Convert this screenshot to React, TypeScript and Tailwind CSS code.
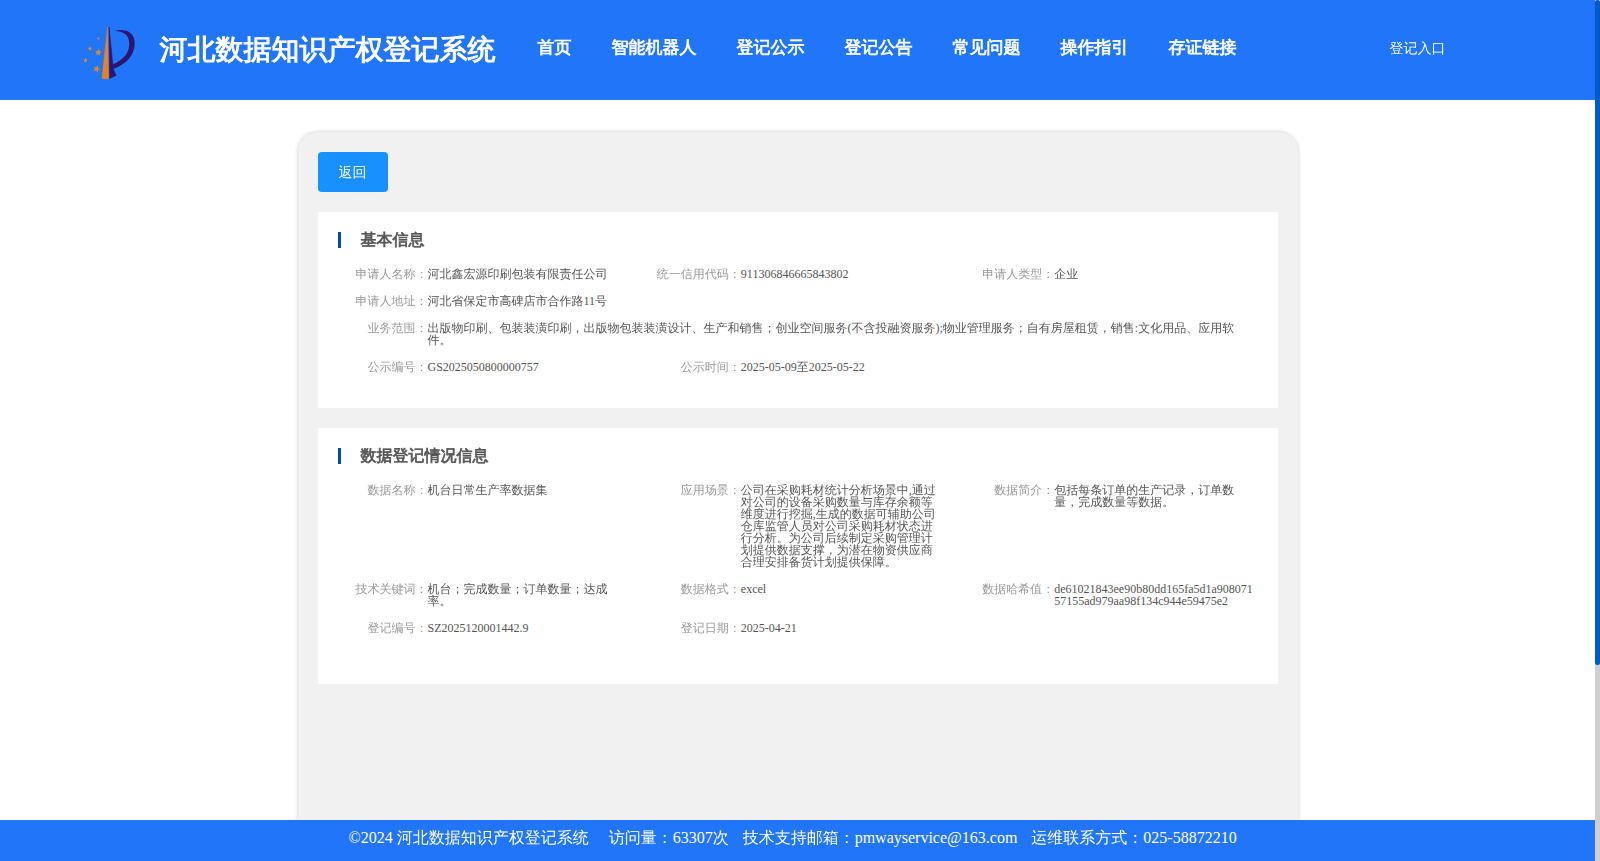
import { clsx } from "clsx";

type Item = {
  label: string;
  value: string;
  full?: boolean;
};

const navItems = ["首页", "智能机器人", "登记公示", "登记公告", "常见问题", "操作指引", "存证链接"];

const basicInfo: Item[] = [
  { label: "申请人名称", value: "河北鑫宏源印刷包装有限责任公司" },
  { label: "统一信用代码", value: "911306846665843802" },
  { label: "申请人类型", value: "企业" },
  { label: "申请人地址", value: "河北省保定市高碑店市合作路11号", full: true },
  {
    label: "业务范围",
    value:
      "出版物印刷、包装装潢印刷，出版物包装装潢设计、生产和销售；创业空间服务(不含投融资服务);物业管理服务；自有房屋租赁，销售:文化用品、应用软件。",
    full: true,
  },
  { label: "公示编号", value: "GS2025050800000757" },
  { label: "公示时间", value: "2025-05-09至2025-05-22" },
];

const dataInfo: Item[] = [
  { label: "数据名称", value: "机台日常生产率数据集" },
  {
    label: "应用场景",
    value:
      "公司在采购耗材统计分析场景中,通过对公司的设备采购数量与库存余额等维度进行挖掘,生成的数据可辅助公司仓库监管人员对公司采购耗材状态进行分析。为公司后续制定采购管理计划提供数据支撑，为潜在物资供应商合理安排备货计划提供保障。",
  },
  { label: "数据简介", value: "包括每条订单的生产记录，订单数量，完成数量等数据。" },
  { label: "技术关键词", value: "机台；完成数量；订单数量；达成率。" },
  { label: "数据格式", value: "excel" },
  { label: "数据哈希值", value: "de61021843ee90b80dd165fa5d1a90807157155ad979aa98f134c944e59475e2" },
  { label: "登记编号", value: "SZ2025120001442.9" },
  { label: "登记日期", value: "2025-04-21" },
];

const star = "M0 -3.4L0.9 -1.1L3.3 -1L1.4 0.5L2 2.9L0 1.5L-2 2.9L-1.4 0.5L-3.3 -1L-0.9 -1.1Z";

function Logo() {
  return (
    <svg width="56" height="56" viewBox="0 0 56 56" className="mt-2 shrink-0">
      <path d="M25.7 1L26.5 53L20 52.4Z" fill="#e8821e" stroke="#e8821e" strokeWidth="0.6" />
      <path d="M27 1L31.2 42.5L34 49.5L27.6 52.6Z" fill="#2a1670" stroke="#2a1670" strokeWidth="0.6" />
      <path
        d="M32.8 4.8C44 2 53 6.5 52.7 17.5C52.4 29.5 44.5 38 31.3 43L31 38.2C42 34 48 25.5 47.2 16.5C46.7 8.5 41.5 5.7 32.8 4.8Z"
        fill="#2a1670"
      />
      <g fill="#d8882f">
        <path d={star} transform="translate(16.3 26.3) rotate(8) scale(1.15)" />
        <path d={star} transform="translate(14.7 43) rotate(20) scale(1.15)" />
        <path d={star} transform="translate(8 22.6) rotate(-12) scale(.75)" />
        <path d={star} transform="translate(3.4 34.3) scale(.75)" />
        <path d={star} transform="translate(16.3 12.4) scale(.5)" />
      </g>
    </svg>
  );
}

function Section({ title, items, className }: { title: string; items: Item[]; className?: string }) {
  return (
    <section className={clsx("mt-5 bg-white pt-5", className)}>
      <h2 className="ml-5 h-4 border-l-3 border-[#00508f] pl-5 text-base leading-4 font-bold text-[#555] [-webkit-text-stroke:0.7px]">
        {title}
      </h2>

      <dl className="mt-5 ml-2.5 flex w-[940px] flex-wrap gap-y-[15px] text-xs leading-3">
        {items.map((item) => (
          <div key={item.label} className={clsx("flex", item.full ? "w-full" : "w-1/3")}>
            <dt className="w-[100px] shrink-0 text-right text-[#999]">{item.label}：</dt>
            <dd className={clsx("break-all text-[#555]", item.full ? "w-[820px]" : "w-[200px]")}>
              {item.value}
            </dd>
          </div>
        ))}
      </dl>
    </section>
  );
}

export default function App() {
  return (
    <div className="flex h-[861px] overflow-hidden bg-white font-['Liberation_Serif','WenQuanYi_Zen_Hei','Noto_Sans_CJK_SC',serif]">
      <div className="flex min-w-0 flex-1 flex-col">

        {/* Header */}
        <header className="flex h-[100px] shrink-0 items-center bg-[#2175f8] pl-[82px] text-white">
          <Logo />
          <h1 className="ml-[21.5px] text-[28px] leading-[38px] font-bold whitespace-nowrap [-webkit-text-stroke:1px]">
            河北数据知识产权登记系统
          </h1>
          <nav className="mb-1 ml-[42px] flex gap-10 text-[17px] leading-6 font-bold whitespace-nowrap [-webkit-text-stroke:0.7px]">
            {navItems.map((name) => (
              <a key={name}>{name}</a>
            ))}
          </nav>
          <a className="mb-0.5 ml-[153px] text-sm whitespace-nowrap">登记入口</a>
        </header>

        {/* Content */}
        <main className="flex min-h-0 flex-1 justify-center overflow-hidden pt-8">
          <div className="h-[900px] w-[1000px] shrink-0 rounded-[20px] bg-[#f1f1f1] p-5 shadow-[0_0_4px_rgba(0,0,0,0.2)]">
            <button className="block h-10 w-[70px] rounded bg-[#1890ff] pt-0.5 text-sm text-white">返回</button>
            <Section title="基本信息" items={basicInfo} className="h-[196px]" />
            <Section title="数据登记情况信息" items={dataInfo} className="h-[256px]" />
          </div>
        </main>

        {/* Footer */}
        <footer className="flex h-[41px] shrink-0 bg-[#2175f8] pt-1.5 pl-[348.5px] text-base leading-6 whitespace-nowrap text-white">
          <span>©2024 河北数据知识产权登记系统</span>
          <span className="ml-5">访问量：63307次</span>
          <span className="ml-3.5">技术支持邮箱：pmwayservice@163.com</span>
          <span className="ml-3.5">运维联系方式：025-58872210</span>
        </footer>
      </div>

      {/* Scrollbar */}
      <div className="w-[5px] shrink-0 bg-[#cfcfcf]">
        <div className="h-[665px] rounded-sm bg-[#005ac8]" />
      </div>
    </div>
  );
}
